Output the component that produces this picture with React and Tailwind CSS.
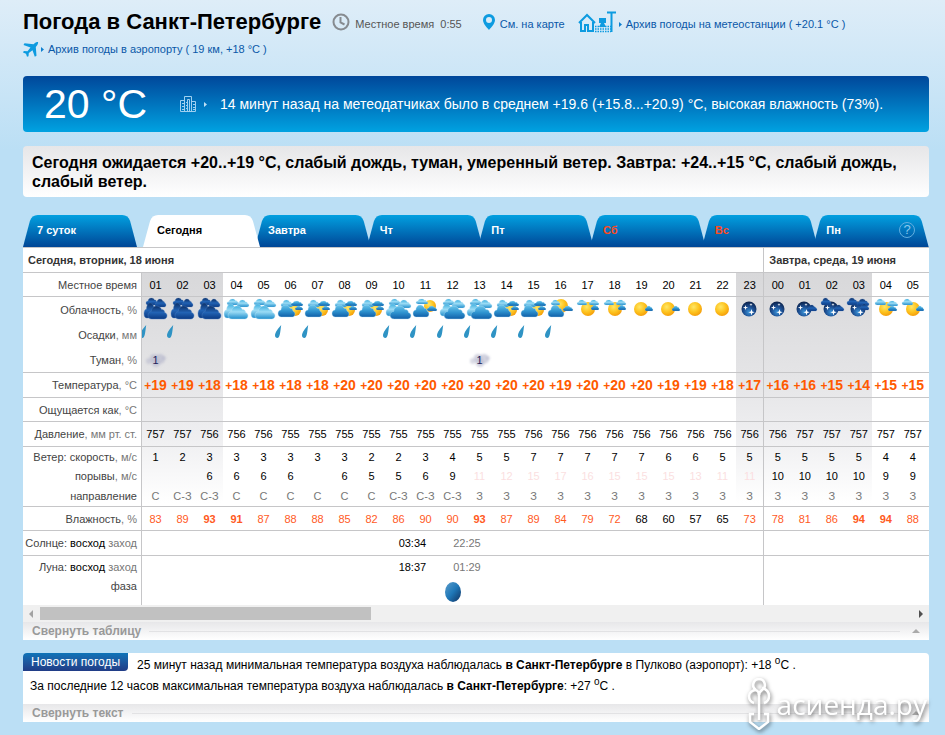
import React, { useState } from 'react';
import clsx from 'clsx';

// icon: weather glyph, night: column gets the grey shade
const hours = [
    { h: '01', icon: 'nightHeavy', night: true, rain: true, fog: 1, t: 19, p: 757, wind: 1, gust: '', dir: 'С', hum: 83 },
    { h: '02', icon: 'nightHeavy', night: true, rain: true, t: 19, p: 757, wind: 2, gust: '', dir: 'С-З', hum: 89 },
    { h: '03', icon: 'nightHeavy', night: true, t: 18, p: 756, wind: 3, gust: 6, dir: 'С-З', hum: 93 },
    { h: '04', icon: 'overcastLight', t: 18, p: 756, wind: 3, gust: 6, dir: 'С', hum: 91 },
    { h: '05', icon: 'overcastLight', t: 18, p: 756, wind: 3, gust: 6, dir: 'С', hum: 87 },
    { h: '06', icon: 'broken', rain: true, t: 18, p: 755, wind: 3, gust: 6, dir: 'С', hum: 88 },
    { h: '07', icon: 'broken', rain: true, t: 18, p: 755, wind: 3, gust: '', dir: 'С', hum: 88 },
    { h: '08', icon: 'broken', t: 20, p: 755, wind: 3, gust: 6, dir: 'С', hum: 85 },
    { h: '09', icon: 'broken', t: 20, p: 755, wind: 2, gust: 5, dir: 'С', hum: 82 },
    { h: '10', icon: 'overcast', rain: true, t: 20, p: 755, wind: 2, gust: 5, dir: 'С-З', hum: 86 },
    { h: '11', icon: 'mostly', rain: true, t: 20, p: 755, wind: 3, gust: 6, dir: 'С-З', hum: 90 },
    { h: '12', icon: 'overcast', rain: true, t: 20, p: 755, wind: 4, gust: 9, dir: 'С-З', hum: 90 },
    { h: '13', icon: 'overcast', rain: true, fog: 1, t: 20, p: 755, wind: 5, gust: 11, dir: 'З', hum: 93 },
    { h: '14', icon: 'broken', rain: true, t: 20, p: 755, wind: 5, gust: 12, dir: 'З', hum: 87 },
    { h: '15', icon: 'broken', rain: true, t: 20, p: 756, wind: 7, gust: 15, dir: 'З', hum: 89 },
    { h: '16', icon: 'sunLow', rain: true, t: 19, p: 756, wind: 7, gust: 17, dir: 'З', hum: 84 },
    { h: '17', icon: 'sunClouds', t: 20, p: 756, wind: 7, gust: 16, dir: 'З', hum: 79 },
    { h: '18', icon: 'sunClouds', t: 20, p: 756, wind: 7, gust: 15, dir: 'З', hum: 72 },
    { h: '19', icon: 'sunFew', t: 20, p: 756, wind: 7, gust: 15, dir: 'З', hum: 68 },
    { h: '20', icon: 'sunFew', t: 19, p: 756, wind: 6, gust: 15, dir: 'З', hum: 60 },
    { h: '21', icon: 'sun', t: 19, p: 756, wind: 6, gust: 13, dir: 'З', hum: 57 },
    { h: '22', icon: 'sun', t: 18, p: 756, wind: 5, gust: 11, dir: 'З', hum: 65 },
    { h: '23', icon: 'moon', night: true, t: 17, p: 756, wind: 5, gust: 11, dir: 'З', hum: 73 },
    { h: '00', icon: 'moon', night: true, t: 16, p: 756, wind: 5, gust: 10, dir: 'З', hum: 78 },
    { h: '01', icon: 'moonFew', night: true, t: 16, p: 757, wind: 5, gust: 10, dir: 'З', hum: 81 },
    { h: '02', icon: 'moonClouds', night: true, t: 15, p: 757, wind: 5, gust: 10, dir: 'З', hum: 86 },
    { h: '03', icon: 'moonMany', night: true, t: 14, p: 757, wind: 5, gust: 10, dir: 'З', hum: 94 },
    { h: '04', icon: 'dawnClouds', t: 15, p: 757, wind: 4, gust: 9, dir: 'З', hum: 94 },
    { h: '05', icon: 'dawnFew', t: 15, p: 757, wind: 4, gust: 9, dir: 'З', hum: 88 },
];
const TODAY = 23; // number of hours that belong to the first day

const tabs = [
    { label: 'Завтра' },
    { label: 'Чт' },
    { label: 'Пт' },
    { label: 'Сб', weekend: true },
    { label: 'Вс', weekend: true },
    { label: 'Пн' },
];

// [x, y, w, h, tone]
const cloudSets = {
    nightHeavy: [[4, 1, 12, 7, 'n'], [13, 2, 11, 8, 'n'], [2, 6, 14, 15, 'n'], [6, 9, 19, 13, 'n']],
    overcastLight: [[4, 2, 12, 6, 'l'], [14, 3, 12, 7, 'l'], [1, 7, 15, 14, 'l'], [5, 9, 20, 13, 'l']],
    overcast: [[4, 2, 12, 6, 'l'], [13, 3, 13, 8, 'l'], [1, 7, 15, 12, 'l'], [5, 9, 21, 13, 'd']],
    broken: [[4, 3, 12, 7, 'l'], [14, 4, 12, 5, 'd'], [18, 9, 8, 4, 'd'], [1, 8, 17, 12, 'd']],
    mostly: [[4, 2, 12, 5, 'l'], [15, 9, 10, 5, 'd'], [1, 8, 16, 12, 'd']],
    sunLow: [[4, 3, 9, 5, 'l'], [16, 9, 10, 5, 'd'], [1, 8, 16, 12, 'd']],
    sunClouds: [[3, 3, 10, 5, 'l'], [15, 3, 10, 5, 'l'], [17, 8, 8, 5, 'd']],
    sunFew: [[17, 9, 8, 5, 'd']],
    sun: [],
    moon: [],
    moonFew: [[16, 8, 10, 6, 'n']],
    moonClouds: [[3, 1, 10, 7, 'n'], [16, 8, 10, 6, 'n']],
    moonMany: [[2, 1, 11, 7, 'n'], [12, 2, 12, 7, 'n'], [15, 7, 9, 6, 'n']],
    dawnClouds: [[3, 2, 11, 6, 'l'], [15, 4, 11, 5, 'l'], [16, 9, 9, 5, 'd']],
    dawnFew: [[3, 2, 11, 6, 'l'], [17, 9, 8, 5, 'd']],
};

const suns = {
    broken: [18, 13, 6],
    mostly: [18, 9, 6],
    sunLow: [14, 9, 7],
    sunClouds: [14, 12, 7],
    sunFew: [13, 12, 7],
    sun: [13, 12, 7],
    dawnClouds: [14, 12, 7],
    dawnFew: [14, 12, 7],
};

// Gradients shared by every weather glyph
const Gradients = () => (
    <svg className="absolute h-0 w-0" aria-hidden="true">
        <defs>
            <linearGradient id="cloud-l" x2="0" y2="1">
                <stop offset="0" stopColor="#3fb0e0" />
                <stop offset=".45" stopColor="#9bdcf5" />
                <stop offset="1" stopColor="#1e8ccb" />
            </linearGradient>
            <linearGradient id="cloud-d" x2="0" y2="1">
                <stop offset="0" stopColor="#68c4ea" />
                <stop offset=".5" stopColor="#2f94d0" />
                <stop offset="1" stopColor="#105fa8" />
            </linearGradient>
            <linearGradient id="cloud-n" x2="0" y2="1">
                <stop offset="0" stopColor="#0d3068" />
                <stop offset=".5" stopColor="#2263b4" />
                <stop offset="1" stopColor="#0b3a83" />
            </linearGradient>
            <radialGradient id="sun" cx=".4" cy=".35" r=".65">
                <stop offset="0" stopColor="#ffe766" />
                <stop offset=".6" stopColor="#fdc21d" />
                <stop offset="1" stopColor="#f5a00c" />
            </radialGradient>
            <radialGradient id="night" cx=".5" cy=".7" r=".7">
                <stop offset="0" stopColor="#3a93d8" />
                <stop offset=".5" stopColor="#1d4f93" />
                <stop offset="1" stopColor="#0b2047" />
            </radialGradient>
            <linearGradient id="phase" x2="1" y2="1">
                <stop offset="0" stopColor="#5d9dcb" />
                <stop offset=".5" stopColor="#1f78b8" />
                <stop offset="1" stopColor="#10305f" />
            </linearGradient>
            <linearGradient id="tab" x2="0" y2="1">
                <stop offset="0" stopColor="#02a0e0" />
                <stop offset="1" stopColor="#004696" />
            </linearGradient>
        </defs>
    </svg>
);

const Cloud = ({ x, y, w, h, tone }) => (
    <path
        transform={`translate(${x} ${y}) scale(${w / 20} ${h / 12})`}
        d="M4 12C1.500 12 0 10.500 0 8.500S1.500 5 3.500 5C3.500 2 6 0 9 0c2.500 0 4.500 1.300 5.200 3.300C16 3 17.500 4.200 17.600 6 19 6.300 20 7.500 20 9c0 1.800-1.400 3-3.200 3Z"
        fill={tone === 'n' ? 'url(#cloud-n)' : tone === 'd' ? 'url(#cloud-d)' : 'url(#cloud-l)'}
        stroke={tone === 'n' ? '#4a7fc0' : '#b8e4f6'}
        strokeWidth={0.4}
    />
);

const WeatherIcon = ({ type }) => {
    const sun = suns[type];
    return (
        <svg width="27" height="24" viewBox="0 0 27 24" className="mx-auto block" aria-hidden="true">
            {sun && <circle cx={sun[0]} cy={sun[1]} r={sun[2]} fill="url(#sun)" />}
            {type.startsWith('moon') && (
                <g>
                    <circle cx="13" cy="12" r="7.500" fill="url(#night)" />
                    <path d="M15.500 12l.8 2.400 2.400.8-2.400.8-.8 2.400-.8-2.400-2.400-.8 2.400-.8zM9.500 8l.6 2 2 .6-2 .6-.6 2-.6-2-2-.6 2-.6zM15 6l.4 1.200 1.200.4-1.200.4L15 9.200 14.600 8l-1.200-.4 1.200-.4z" fill="#fff" />
                </g>
            )}
            {cloudSets[type].map(([x, y, w, h, tone], i) => (
                <Cloud key={i} x={x} y={y} w={w} h={h} tone={tone} />
            ))}
        </svg>
    );
};

const Drop = () => (
    <svg width="8" height="13" viewBox="0 0 8 13" className="-ml-[3px] block" aria-hidden="true">
        <path d="M7.200 0C4.500 3 1 7.500 1 10.300 1 12 2 13 3.300 13 6 13 6.200 7 7.200 0Z" fill="#2f93c4" />
    </svg>
);

const Fog = ({ value }) => (
    <div className="relative mx-auto flex h-4 w-6 items-center justify-center">
        <svg viewBox="0 0 24 16" className="absolute inset-0 blur-[1px]" aria-hidden="true">
            <g fill="#b4b6cc">
                <circle cx="5" cy="9" r="3" opacity=".5" />
                <circle cx="10" cy="6" r="4" opacity=".6" />
                <circle cx="16" cy="7" r="5" opacity=".6" />
                <circle cx="12" cy="11" r="4" opacity=".6" />
                <circle cx="20" cy="6" r="2" opacity=".5" />
            </g>
        </svg>
        <span className="relative text-[#22225a]">{value}</span>
    </div>
);

const Arrow = ({ className }) => (
    <svg width="3" height="5" viewBox="0 0 3 5" className={className} aria-hidden="true">
        <path d="M0 0l3 2.500L0 5z" fill="currentColor" />
    </svg>
);

const TabShape = ({ active }) => (
    <svg
        viewBox="0 0 116 32"
        preserveAspectRatio="none"
        className="absolute inset-y-0 -left-[2px] h-full w-[calc(100%+4px)]"
        aria-hidden="true"
    >
        <path
            d="M0 32L7 6Q9 0 15 0H101Q107 0 109 6L116 32Z"
            fill={active ? '#fff' : 'url(#tab)'}
        />
    </svg>
);

const Tab = ({ label, active, weekend, pad }) => (
    <button
        type="button"
        role="tab"
        aria-selected={!!active}
        className={clsx('relative h-8 flex-1 pb-[2px] text-left text-[11px] font-bold', pad, active ? 'z-10 text-black' : weekend ? 'text-[#ff4a1c]' : 'text-white')}
    >
        <TabShape active={active} />
        <span className="relative">{label}</span>
    </button>
);

const CollapseBar = ({ children, onClick, open }) => (
    <button
        type="button"
        onClick={onClick}
        aria-expanded={open}
        className="flex h-[18px] w-full items-center gap-2 bg-linear-to-b from-[#e7e7e9] to-white pr-[9px] pl-[9px] text-left text-xs font-bold text-[#999]"
    >
        {children}
        <span className="mr-1 h-px flex-1 bg-[#e2e2e4]" />
        <svg width="8" height="4" viewBox="0 0 8 4" aria-hidden="true">
            <path d="M4 0l4 4H0z" fill="#aaa" />
        </svg>
    </button>
);

// One line of the table: label on the left and a cell for every hour
const Row = ({ label, height, line, render, cellClass, tall }) => (
    <tr className={height}>
        <th
            scope="row"
            className={clsx('border-r border-[#c6c6c8] pr-1 text-right font-normal whitespace-nowrap text-[#444]', line && 'border-b')}
        >
            {label}
        </th>
        {hours.map((hour, i) => (
            <td
                key={i}
                className={clsx(
                    'border-[#c6c6c8] text-center whitespace-nowrap',
                    tall && 'align-top',
                    line && 'border-b',
                    i === TODAY && 'border-l',
                    cellClass
                )}
            >
                {render(hour, i)}
            </td>
        ))}
        <td className={clsx('border-[#c6c6c8]', line && 'border-b')} />
    </tr>
);

const WideRow = ({ label, height, line, children }) => (
    <tr className={height}>
        <th
            scope="row"
            className={clsx('border-r border-[#c6c6c8] pr-1 text-right align-middle font-normal whitespace-nowrap text-[#444]', line && 'border-b')}
        >
            {label}
        </th>
        <td colSpan={TODAY} className={clsx('border-[#c6c6c8]', line && 'border-b')}>{children}</td>
        <td colSpan={hours.length - TODAY + 1} className={clsx('border-l border-[#c6c6c8]', line && 'border-b')} />
    </tr>
);

const Unit = ({ children }) => <span className="text-[#777]">{children}</span>;

const RiseSet = ({ rise, set }) => (
    <div className="flex justify-center gap-[27px] pr-[26px]">
        <span className="text-black">{rise}</span>
        <span className="text-[#777]">{set}</span>
    </div>
);

const ForecastTable = () => (
    <table className="w-full table-fixed border-separate border-spacing-0 text-[11px] leading-[14px] text-black">
        <colgroup>
            <col className="w-[119px]" />
            {hours.map((hour, i) => (
                <col
                    key={i}
                    className={clsx(
                        i === TODAY ? 'w-[28px]' : 'w-[27px]',
                        hour.night && 'bg-[linear-gradient(to_bottom,transparent_25px,#d8d8da_25px,#e4e4e6_125px,#efeff1_190px,#ffffff_255px,transparent_255px)]'
                    )}
                />
            ))}
            <col />
        </colgroup>
        <thead>
            <tr className="h-[25px] text-left text-[#333]">
                <th colSpan={TODAY + 1} className="border-b border-[#c6c6c8] pl-[5px]">Сегодня, вторник, 18 июня</th>
                <th colSpan={hours.length - TODAY + 1} className="border-b border-l border-[#c6c6c8] pl-[5px]">Завтра, среда, 19 июня</th>
            </tr>
        </thead>
        <tbody>
            <Row label="Местное время" height="h-6" line render={(x) => x.h} />
            <Row label={<>Облачность<Unit>, %</Unit></>} height="h-[25px]" tall render={(x) => <WeatherIcon type={x.icon} />} />
            <Row
                label={<>Осадки<Unit>, мм</Unit></>}
                height="h-[25px]"
                tall
                cellClass="pt-[3px]"
                render={(x, i) => x.rain && <div className={i === 0 ? 'overflow-hidden' : ''}><Drop /></div>}
            />
            <Row label={<>Туман<Unit>, %</Unit></>} height="h-[26px]" line render={(x) => x.fog && <Fog value={x.fog} />} />
            <Row
                label={<>Температура<Unit>, °C</Unit></>}
                height="h-[25px]"
                line
                cellClass="text-sm font-bold text-[#ff5a00]"
                render={(x) => <><span className="text-xs">+</span>{x.t}</>}
            />
            <Row label={<>Ощущается как<Unit>, °C</Unit></>} height="h-6" line render={() => null} />
            <Row label={<>Давление<Unit>, мм рт. ст.</Unit></>} height="h-[25px]" line render={(x) => x.p} />
            <Row label={<>Ветер: скорость<Unit>, м/с</Unit></>} height="h-[19px]" render={(x) => x.wind} />
            <Row
                label={<>порывы<Unit>, м/с</Unit></>}
                height="h-5"
                render={(x) => <span className={x.gust > 10 ? 'text-[#fbdfe1]' : ''}>{x.gust}</span>}
            />
            <Row label="направление" height="h-[21px]" line cellClass="text-[#777]" render={(x) => x.dir} />
            <Row
                label={<>Влажность<Unit>, %</Unit></>}
                height="h-6"
                line
                render={(x) => (
                    <span className={clsx(x.hum >= 70 && 'text-[#ff5a1e]', x.hum > 90 && 'font-bold')}>{x.hum}</span>
                )}
            />
            <WideRow label={<>Солнце: <span className="text-black">восход</span> <Unit>заход</Unit></>} height="h-[25px]" line>
                <RiseSet rise="03:34" set="22:25" />
            </WideRow>
            <WideRow label={<>Луна: <span className="text-black">восход</span> <Unit>заход</Unit></>} height="h-[22px]">
                <RiseSet rise="18:37" set="01:29" />
            </WideRow>
            <WideRow label={<span className="block pb-3">фаза</span>} height="h-[27px]">
                <svg width="16" height="20" viewBox="0 0 16 20" className="mx-auto block" aria-hidden="true">
                    <ellipse cx="8" cy="10" rx="8" ry="10" fill="url(#phase)" />
                </svg>
            </WideRow>
        </tbody>
    </table>
);

const PlaneIcon = () => (
    <svg width="16" height="15" viewBox="0 0 16 15" fill="#0d9be0" aria-hidden="true">
        <path d="M15 0c-1.500-.3-3 1-4.500 2.300L1.500 1.300.5 3 7.500 5.500 4.500 9.300.8 9 0 10.500l3 1.300 1 2.900 1.500-.5.300-3.200L9.500 8.200l2.300 6.500 1.700-1L12.800 5C14 3.500 15.500 1.500 15 0Z" />
    </svg>
);

const StationIcon = () => (
    <svg width="39" height="22" viewBox="0 0 39 22" fill="none" stroke="#0d9be0" aria-hidden="true">
        <path d="M1 12l8-8 8 8" strokeWidth="2" />
        <path d="M3 11v9h4v-6h3v6h5v-9" strokeWidth="2" />
        <path d="M33.500 21V2M29 1.500h9" strokeWidth="2" />
        <path d="M21 7h7v5h-7z" fill="#0d9be0" stroke="none" />
        <path d="M23 12h3l2 4h-7z" fill="#0d9be0" stroke="none" />
        <path d="M17 15.500h16M17 18h16M17 20.500h16" strokeWidth="1.500" strokeDasharray="1.500 1" />
    </svg>
);

const Watermark = () => (
    <div className="pointer-events-none absolute right-[18px] bottom-[5px] flex items-center gap-1 text-white drop-shadow-[1px_2px_2px_rgba(0,0,0,0.55)]">
        <svg width="28" height="52" viewBox="0 0 28 52" fill="none" stroke="currentColor" strokeWidth="2.500" aria-hidden="true">
            <path d="M11 12C6 9 8 1 14 1s8 8 3 11c-2 1.500-3 3-3 5M11 12c-4 0-7 3-7 6s2 6 5 7M17 10c4 1 7 4 7 8s-2 6-5 7M11 12c2 1 3 3 3 5" />
            <path d="M14 16v26M9 36H5v8l9 7 9-7v-8h-4" />
        </svg>
        <span className="font-['Open_Sans',sans-serif] text-[28px] leading-8">асиенда.ру</span>
    </div>
);

const App = () => {
    const [showTable, setShowTable] = useState(true);
    const [showNews, setShowNews] = useState(true);

    return (
        <div className="relative min-h-screen bg-[#bbdff5] bg-[linear-gradient(to_bottom,#deedf8,#bbdff5_150px)] pt-2 pr-4 pb-[13px] pl-[23px] font-['Liberation_Sans',Arial,sans-serif]">
            <Gradients />

            <header className="text-[11px] text-[#0a58a8]">
                <div className="flex h-[27px] items-center">
                    <h1 className="text-[22px] leading-[26px] font-bold whitespace-nowrap text-black">Погода в Санкт-Петербурге</h1>
                    <svg width="18" height="18" viewBox="0 0 18 18" fill="none" stroke="#868b90" strokeWidth="2" className="ml-[11px]" aria-hidden="true">
                        <circle cx="9" cy="9" r="7.500" />
                        <path d="M8.500 4v5.500l4 2" />
                    </svg>
                    <span className="mt-[5px] ml-[5px] whitespace-nowrap text-[#555]">Местное время&nbsp; 0:55</span>
                    <svg width="12" height="16" viewBox="0 0 12 16" className="ml-[21px]" aria-hidden="true">
                        <path fillRule="evenodd" d="M6 0a6 6 0 0 1 6 6c0 3.500-3.500 7-6 10-2.500-3-6-6.500-6-10a6 6 0 0 1 6-6Zm0 3a3 3 0 1 0 0 6 3 3 0 0 0 0-6Z" fill="#0d9be0" />
                    </svg>
                    <a href="#map" className="mt-[5px] ml-[5px] whitespace-nowrap">См. на карте</a>
                    <a href="#station" className="ml-[13px] flex items-center whitespace-nowrap">
                        <StationIcon />
                        <Arrow className="mt-[5px] ml-[2px] text-[#0d7fd0]" />
                        <span className="mt-[5px] ml-1">Архив погоды на метеостанции ( +20.1 °C )</span>
                    </a>
                </div>
                <a href="#airport" className="flex h-7 w-fit items-center">
                    <PlaneIcon />
                    <Arrow className="ml-[2px] text-[#0d7fd0]" />
                    <span className="ml-1">Архив погоды в аэропорту ( 19 км, +18 °C )</span>
                </a>
            </header>

            <section className="mt-[13px] flex h-14 items-center rounded bg-linear-to-b from-[#00479a] to-[#00a2e1] text-white">
                <p className="ml-[21px] text-[41px] leading-none">20 °C</p>
                <svg width="16" height="16" viewBox="0 0 16 16" fill="none" stroke="#9fd0f0" className="ml-[33px]" aria-hidden="true">
                    <path d="M4.500 15.500v-15h7v15M4.500 4.500h-4v11h15v-10h-4M7.500 15.500v-12h2v12" />
                    <path d="M2 7.500h2M2 10.500h2M2 13.500h2M13 8.500h2M13 11.500h2M13 13.500h2M6 6.500h1M6 9.500h1M6 12.500h1" />
                </svg>
                <Arrow className="ml-2 text-[#bfe0f5]" />
                <p className="ml-[13px] text-sm">14 минут назад на метеодатчиках было в среднем +19.6 (+15.8...+20.9) °C, высокая влажность (73%).</p>
            </section>

            <section className="mt-[14px] rounded bg-linear-to-b from-[#e6e6e8] to-white px-[9px] pt-[7px] pb-[6px]">
                <p className="text-base leading-[19px] font-bold text-black">
                    Сегодня ожидается +20..+19 °C, слабый дождь, туман, умеренный ветер. Завтра: +24..+15 °C, слабый дождь, слабый ветер.
                </p>
            </section>

            <section className="mt-[18px]">
                <div role="tablist" className="flex">
                    <div className="flex w-[114px] px-[2px]">
                        <Tab label="7 суток" pad="pl-3" />
                    </div>
                    <div className="z-10 ml-[6px] flex w-[117px] px-[2px]">
                        <Tab label="Сегодня" active pad="pl-3" />
                    </div>
                    <div className="-ml-[3px] flex flex-1 pr-[2px]">
                        {tabs.map((tab) => (
                            <Tab key={tab.label} label={tab.label} weekend={tab.weekend} pad="pl-[11px]" />
                        ))}
                    </div>
                    <button type="button" aria-label="Справка" className="z-10 mt-[7px] mr-[14px] -ml-[30px] h-4 w-4 rounded-full border border-[#62aee0] text-[13px] leading-[14px] text-[#8cc8ec]">
                        ?
                    </button>
                </div>
                <div className="border-t border-[#c6c6c8] bg-white">
                    {showTable && (
                        <>
                            <div className="overflow-x-hidden">
                                <ForecastTable />
                            </div>
                            <div className="flex h-[17px] items-center bg-[#f0f0f0] px-[6px]">
                                <svg width="4" height="8" viewBox="0 0 4 8" aria-hidden="true">
                                    <path d="M4 0v8L0 4z" fill="#a3a3a3" />
                                </svg>
                                <div className="mx-[7px] flex-1">
                                    <div className="h-[13px] w-[38%] bg-[#c1c1c1]" />
                                </div>
                                <svg width="4" height="8" viewBox="0 0 4 8" aria-hidden="true">
                                    <path d="M0 0v8l4-4z" fill="#505050" />
                                </svg>
                            </div>
                        </>
                    )}
                    <CollapseBar open={showTable} onClick={() => setShowTable(!showTable)}>Свернуть таблицу</CollapseBar>
                </div>
            </section>

            <section className="mt-[13px] overflow-hidden rounded-t bg-white text-xs leading-[21px] text-black">
                {showNews && (
                    <div className="h-[51px]">
                        <h2 className="float-left mr-[9px] h-[18px] rounded-br bg-linear-to-b from-[#0e74b8] to-[#203c86] px-2 leading-[18px] text-white">Новости погоды</h2>
                        <p className="pt-[2px]">25 минут назад минимальная температура воздуха наблюдалась <b>в Санкт-Петербурге</b> в Пулково (аэропорт): +18 <sup className="text-[10px]">o</sup>C .</p>
                        <p className="clear-left pl-[7px]">За последние 12 часов максимальная температура воздуха наблюдалась <b>в Санкт-Петербурге</b>: +27 <sup className="text-[10px]">o</sup>C .</p>
                    </div>
                )}
                <CollapseBar open={showNews} onClick={() => setShowNews(!showNews)}>Свернуть текст</CollapseBar>
            </section>

            <Watermark />
        </div>
    );
};

export default App;
